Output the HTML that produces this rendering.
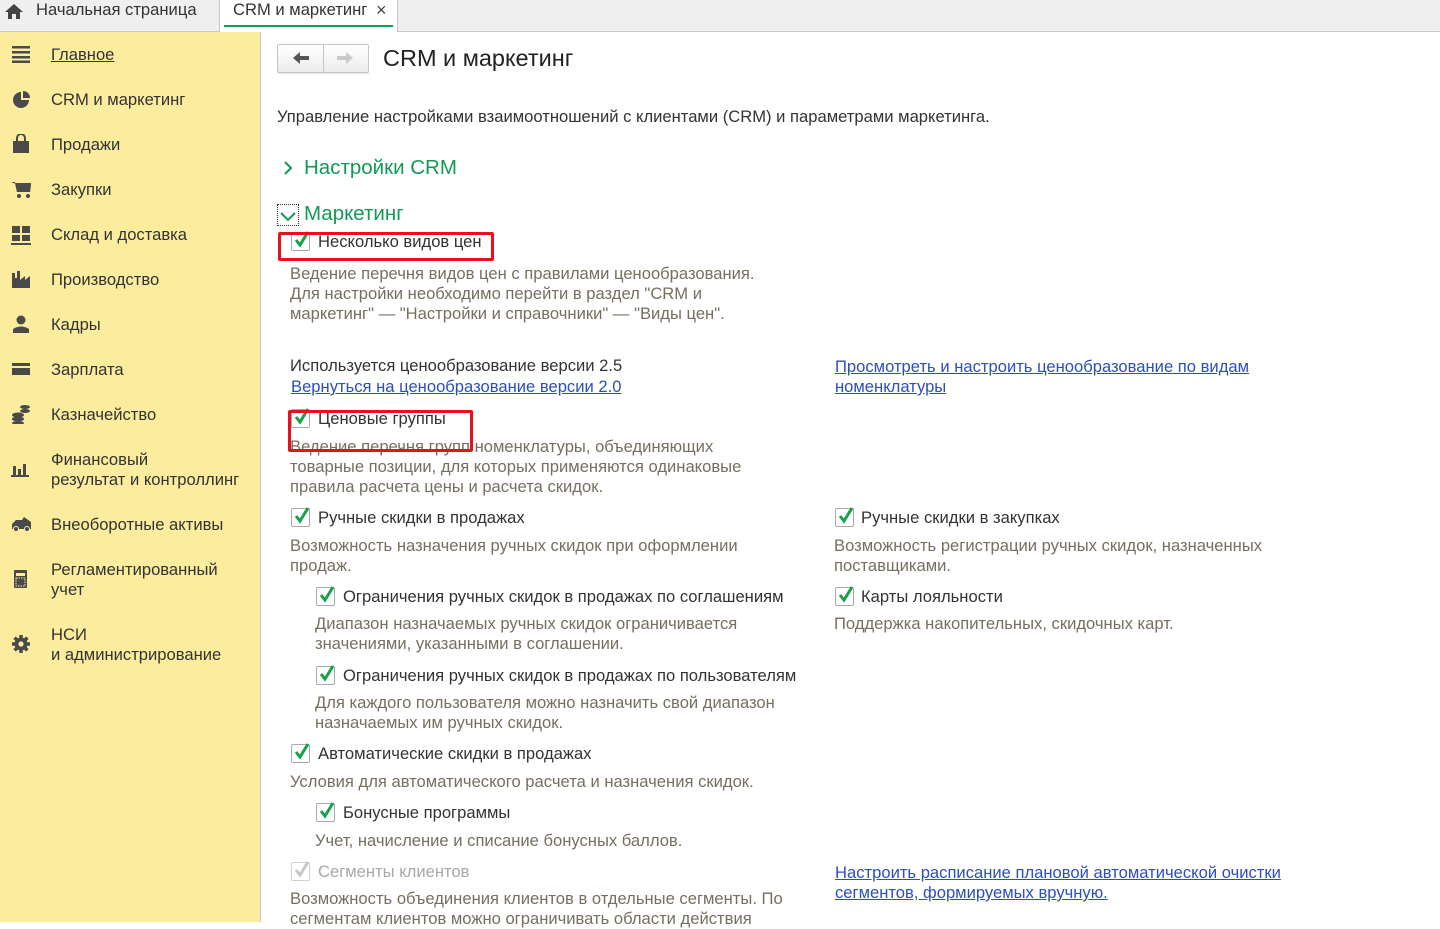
<!DOCTYPE html>
<html><head><meta charset="utf-8">
<style>
*{margin:0;padding:0;box-sizing:border-box}
body{width:1440px;height:922px;overflow:hidden;background:#fff;font-family:"Liberation Sans",Arial,sans-serif;font-size:16.6px;color:#333;position:relative}
.a{position:absolute;white-space:nowrap;line-height:20px;transform:translateY(1px)}
.d{color:#756f60}
.lk{color:#2c4fb8;text-decoration:underline}
.cb{position:absolute;width:19px;height:19px;border:1px solid #a9a9a9;border-radius:2px;background:#fff}
.cb svg{position:absolute;left:1px;top:-3px}
.ic{position:absolute;left:11px}
</style></head><body>
<div style="position:absolute;left:0;top:0;width:1440px;height:32px;background:#efefef;border-bottom:1px solid #c8c8c8"></div>
<svg class="a" style="left:4px;top:1px" width="20" height="20" viewBox="0 0 20 20"><path d="M10 2 L19 10 H16 V17 H12 V12 H8 V17 H4 V10 H1Z" fill="#444"/></svg>
<div class="a" style="left:36px;top:-1px">Начальная страница</div>
<div style="position:absolute;left:219px;top:0;width:179px;height:32px;background:#fff;border-left:1px solid #c8c8c8;border-right:1px solid #c8c8c8"></div>
<div style="position:absolute;left:224px;top:25px;width:169px;height:2px;background:#12a050"></div>
<div class="a" style="left:233px;top:-1px">CRM и маркетинг</div>
<div class="a" style="left:376px;top:-1px;color:#444;font-size:18px">×</div>

<div style="position:absolute;left:0;top:32px;width:261px;height:890px;background:#fbec9e;border-right:1px solid #c8c8c8"></div>
<svg class="ic" style="top:45px" width="20" height="18"><rect x="1" y="1" width="18" height="2.5" fill="#4a4a4a"/><rect x="1" y="6" width="18" height="2.5" fill="#4a4a4a"/><rect x="1" y="11" width="18" height="2.5" fill="#4a4a4a"/><rect x="1" y="15.5" width="18" height="2.5" fill="#4a4a4a"/></svg>
<div class="a" style="left:51px;top:44px;text-decoration:underline">Главное</div>
<svg class="ic" style="top:90px" width="20" height="20"><path d="M10 2 A8 8 0 1 0 18 10 H10Z" fill="#4a4a4a"/><path d="M12 1 A7 7 0 0 1 19 8 H12Z" fill="#4a4a4a"/></svg>
<div class="a" style="left:51px;top:89px">CRM и маркетинг</div>
<svg class="ic" style="top:134px" width="20" height="20"><path d="M2 7 H18 V19 H2Z" fill="#4a4a4a"/><path d="M6 8 V4 A4 4 0 0 1 14 4 V8" stroke="#4a4a4a" stroke-width="2" fill="none"/></svg>
<div class="a" style="left:51px;top:134px">Продажи</div>
<svg class="ic" style="top:180px" width="22" height="18"><path d="M0 2 H4 L6 12 H19 L20 4 H5" fill="#4a4a4a"/><path d="M4 3 H20 L19 12 H6Z" fill="#4a4a4a"/><circle cx="8" cy="16" r="2" fill="#4a4a4a"/><circle cx="17" cy="16" r="2" fill="#4a4a4a"/></svg>
<div class="a" style="left:51px;top:179px">Закупки</div>
<svg class="ic" style="top:225px" width="20" height="20"><rect x="1" y="1" width="8" height="7" fill="#4a4a4a"/><rect x="11" y="1" width="8" height="7" fill="#4a4a4a"/><rect x="1" y="10" width="8" height="6" fill="#4a4a4a"/><rect x="11" y="10" width="8" height="6" fill="#4a4a4a"/><rect x="0" y="18" width="20" height="2" fill="#4a4a4a"/></svg>
<div class="a" style="left:51px;top:224px">Склад и доставка</div>
<svg class="ic" style="top:270px" width="20" height="18"><path d="M1 18 V3 H4 V8 H6 V1 H9 V10 L14 6 V10 L19 6 V18Z" fill="#4a4a4a"/></svg>
<div class="a" style="left:51px;top:269px">Производство</div>
<svg class="ic" style="top:315px" width="20" height="18"><circle cx="10" cy="5" r="4.5" fill="#4a4a4a"/><path d="M2 18 V14 Q10 9 18 14 V18Z" fill="#4a4a4a"/></svg>
<div class="a" style="left:51px;top:314px">Кадры</div>
<svg class="ic" style="top:361px" width="20" height="16"><rect x="1" y="2" width="18" height="12" fill="#4a4a4a"/><rect x="1" y="5" width="18" height="2" fill="#fbec9e"/></svg>
<div class="a" style="left:51px;top:359px">Зарплата</div>
<svg class="ic" style="top:404px" width="20" height="20"><ellipse cx="7" cy="11" rx="6" ry="2.5" fill="#4a4a4a"/><ellipse cx="7" cy="15" rx="6" ry="2.5" fill="#4a4a4a"/><ellipse cx="7" cy="19" rx="6" ry="2" fill="#4a4a4a"/><ellipse cx="14" cy="3" rx="5" ry="2" fill="#4a4a4a"/><ellipse cx="14" cy="7" rx="5" ry="2" fill="#4a4a4a"/></svg>
<div class="a" style="left:51px;top:404px">Казначейство</div>
<svg class="ic" style="top:460px" width="20" height="18"><rect x="2" y="6" width="3" height="10" fill="#4a4a4a"/><rect x="7" y="9" width="3" height="7" fill="#4a4a4a"/><rect x="12" y="4" width="3" height="12" fill="#4a4a4a"/><rect x="0" y="15" width="18" height="2" fill="#4a4a4a"/></svg>
<div class="a" style="left:51px;top:449px">Финансовый<br>результат и контроллинг</div>
<svg class="ic" style="top:514px" width="22" height="18"><path d="M1 15 V10 L5 6 H11 L13 3 L20 8 V15Z" fill="#4a4a4a"/><circle cx="5" cy="15" r="2.5" fill="#4a4a4a" stroke="#fbec9e"/><circle cx="16" cy="15" r="2.5" fill="#4a4a4a" stroke="#fbec9e"/></svg>
<div class="a" style="left:51px;top:514px">Внеоборотные активы</div>
<svg class="ic" style="top:569px" width="20" height="20"><rect x="3" y="1" width="13" height="18" rx="1" fill="#4a4a4a"/><rect x="5" y="4" width="9" height="3" fill="#fbec9e"/><rect x="5" y="9" width="9" height="8" fill="none" stroke="#fbec9e" stroke-width="1" stroke-dasharray="1.5 1"/></svg>
<div class="a" style="left:51px;top:559px">Регламентированный<br>учет</div>
<svg class="ic" style="top:634px" width="20" height="20" viewBox="0 0 20 20"><circle cx="10" cy="10" r="6.5" fill="#4a4a4a"/><g stroke="#4a4a4a" stroke-width="3.5"><path d="M10 1V19M1 10H19M3.6 3.6L16.4 16.4M16.4 3.6L3.6 16.4"/></g><circle cx="10" cy="10" r="2.6" fill="#fbec9e"/></svg>
<div class="a" style="left:51px;top:624px">НСИ<br>и администрирование</div>

<div style="position:absolute;left:277px;top:44px;width:92px;height:29px;border:1px solid #c6c6c6;border-radius:2px;background:linear-gradient(#fff,#ececec);box-shadow:0 1px 1px rgba(0,0,0,.1)"></div>
<div style="position:absolute;left:323px;top:45px;width:1px;height:27px;background:#c6c6c6"></div>
<svg style="position:absolute;left:291px;top:50px" width="20" height="16"><path d="M2 8 L9 2 V6 H18 V10 H9 V14Z" fill="#555"/></svg>
<svg style="position:absolute;left:335px;top:50px" width="20" height="16"><path d="M18 8 L11 2 V6 H2 V10 H11 V14Z" fill="#c9c9c9"/></svg>
<div class="a" style="left:383px;top:43px;font-size:23.5px;line-height:28px;color:#222">CRM и маркетинг</div>

<div class="a" style="left:277px;top:106px">Управление настройками взаимоотношений с клиентами (CRM) и параметрами маркетинга.</div>

<svg style="position:absolute;left:282px;top:159px" width="12" height="18"><path d="M3 3 L9 9 L3 15" stroke="#129a55" stroke-width="2" fill="none"/></svg>
<div class="a" style="left:304px;top:155px;font-size:20.5px;line-height:24px;color:#129a55">Настройки CRM</div>

<div style="position:absolute;left:277px;top:204px;width:22px;height:22px;border:1px dotted #333"></div>
<svg style="position:absolute;left:278px;top:209px" width="20" height="14"><path d="M3 4 L10 11 L17 4" stroke="#129a55" stroke-width="2" fill="none"/></svg>
<div class="a" style="left:304px;top:201px;font-size:20.5px;line-height:24px;color:#129a55">Маркетинг</div>

<div class="cb" style="left:291px;top:232px"><svg width="20" height="20"><path d="M3 10 L7 15 L15 2" stroke="#18a04a" stroke-width="3" fill="none"/></svg></div>
<div class="a" style="left:318px;top:231px">Несколько видов цен</div>
<div style="position:absolute;left:278px;top:232px;width:216px;height:29px;border:3px solid #e8101a;border-radius:2px"></div>
<div class="a d" style="left:290px;top:263px">Ведение перечня видов цен с правилами ценообразования.<br>Для настройки необходимо перейти в раздел "CRM и<br>маркетинг" — "Настройки и справочники" — "Виды цен".</div>

<div class="a" style="left:290px;top:355px">Используется ценообразование версии 2.5</div>
<div class="a lk" style="left:291px;top:376px">Вернуться на ценообразование версии 2.0</div>
<div class="a lk" style="left:835px;top:356px">Просмотреть и настроить ценообразование по видам <br>номенклатуры</div>

<div class="cb" style="left:291px;top:409px"><svg width="20" height="20"><path d="M3 10 L7 15 L15 2" stroke="#18a04a" stroke-width="3" fill="none"/></svg></div>
<div class="a" style="left:318px;top:408px">Ценовые группы</div>
<div class="a d" style="left:290px;top:436px">Ведение перечня групп номенклатуры, объединяющих<br>товарные позиции, для которых применяются одинаковые<br>правила расчета цены и расчета скидок.</div>
<div style="position:absolute;left:288px;top:410px;width:185px;height:42px;border:3px solid #e8101a;border-radius:2px"></div>

<div class="cb" style="left:291px;top:508px"><svg width="20" height="20"><path d="M3 10 L7 15 L15 2" stroke="#18a04a" stroke-width="3" fill="none"/></svg></div>
<div class="a" style="left:318px;top:507px">Ручные скидки в продажах</div>
<div class="a d" style="left:290px;top:535px">Возможность назначения ручных скидок при оформлении<br>продаж.</div>

<div class="cb" style="left:835px;top:508px"><svg width="20" height="20"><path d="M3 10 L7 15 L15 2" stroke="#18a04a" stroke-width="3" fill="none"/></svg></div>
<div class="a" style="left:861px;top:507px">Ручные скидки в закупках</div>
<div class="a d" style="left:834px;top:535px">Возможность регистрации ручных скидок, назначенных<br>поставщиками.</div>

<div class="cb" style="left:316px;top:587px"><svg width="20" height="20"><path d="M3 10 L7 15 L15 2" stroke="#18a04a" stroke-width="3" fill="none"/></svg></div>
<div class="a" style="left:343px;top:586px">Ограничения ручных скидок в продажах по соглашениям</div>
<div class="a d" style="left:315px;top:613px">Диапазон назначаемых ручных скидок ограничивается<br>значениями, указанными в соглашении.</div>

<div class="cb" style="left:835px;top:587px"><svg width="20" height="20"><path d="M3 10 L7 15 L15 2" stroke="#18a04a" stroke-width="3" fill="none"/></svg></div>
<div class="a" style="left:861px;top:586px">Карты лояльности</div>
<div class="a d" style="left:834px;top:613px">Поддержка накопительных, скидочных карт.</div>

<div class="cb" style="left:316px;top:666px"><svg width="20" height="20"><path d="M3 10 L7 15 L15 2" stroke="#18a04a" stroke-width="3" fill="none"/></svg></div>
<div class="a" style="left:343px;top:665px">Ограничения ручных скидок в продажах по пользователям</div>
<div class="a d" style="left:315px;top:692px">Для каждого пользователя можно назначить свой диапазон<br>назначаемых им ручных скидок.</div>

<div class="cb" style="left:291px;top:744px"><svg width="20" height="20"><path d="M3 10 L7 15 L15 2" stroke="#18a04a" stroke-width="3" fill="none"/></svg></div>
<div class="a" style="left:318px;top:743px">Автоматические скидки в продажах</div>
<div class="a d" style="left:290px;top:771px">Условия для автоматического расчета и назначения скидок.</div>

<div class="cb" style="left:316px;top:803px"><svg width="20" height="20"><path d="M3 10 L7 15 L15 2" stroke="#18a04a" stroke-width="3" fill="none"/></svg></div>
<div class="a" style="left:343px;top:802px">Бонусные программы</div>
<div class="a d" style="left:315px;top:830px">Учет, начисление и списание бонусных баллов.</div>

<div class="cb" style="left:291px;top:862px;border-color:#d0d0d0"><svg width="20" height="20"><path d="M3 10 L7 15 L15 2" stroke="#c8c8c8" stroke-width="3" fill="none"/></svg></div>
<div class="a" style="left:318px;top:861px;color:#a8a8a8">Сегменты клиентов</div>
<div class="a d" style="left:290px;top:888px">Возможность объединения клиентов в отдельные сегменты. По<br>сегментам клиентов можно ограничивать области действия</div>
<div class="a lk" style="left:835px;top:862px">Настроить расписание плановой автоматической очистки <br>сегментов, формируемых вручную.</div>
</body></html>
